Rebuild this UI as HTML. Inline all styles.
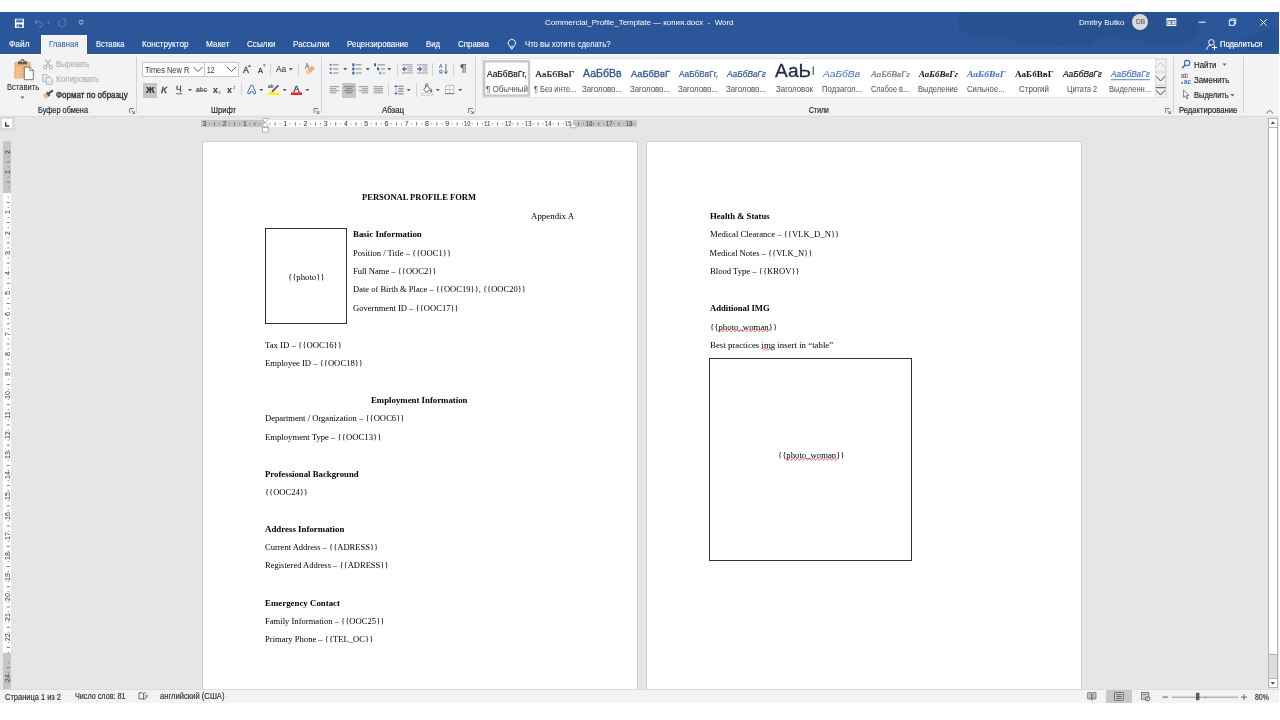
<!DOCTYPE html>
<html lang="ru"><head><meta charset="utf-8"><title>Word</title>
<style>
html,body{margin:0;padding:0;background:#fff;}
body{width:1280px;height:720px;position:relative;overflow:hidden;font-family:"Liberation Sans",sans-serif;}
#w div,#w span,#w svg{position:absolute;display:block;}
#w span{white-space:pre;transform-origin:0 50%;}
#w{will-change:transform;}
#w{position:absolute;left:0;top:0;width:1280px;height:720px;overflow:hidden;}
</style></head>
<body><div id="w">
<div style="left:0px;top:12px;width:1279px;height:42px;background:#2b579a;"></div>
<div style="left:0px;top:54px;width:1279px;height:62px;background:#f3f3f3;"></div>
<div style="left:0px;top:116px;width:1279px;height:573px;background:#e6e6e6;"></div>
<div style="left:0px;top:115px;width:1279px;height:1px;background:#efefef;"></div>
<div style="left:0px;top:116px;width:1279px;height:1px;background:#dcdcdc;"></div>
<div style="left:0px;top:689px;width:1279px;height:14px;background:#f3f3f3;"></div>
<div style="left:0px;top:689px;width:1279px;height:1px;background:#dcdcdc;"></div>
<svg style="left:880px;top:12px;" width="399" height="42" viewBox="0 0 399 42"><path d="M82 0 C76 5 76 16 84 21 C98 27 116 22 130 25 C134 30 136 32 142 32 C165 35 190 31 210 33 C214 31 213 28 218 27 C232 24 248 29 260 27 C263 29 263 31 268 31 C282 33 296 33 305 31 C314 28 318 22 319 15 C320 9 320 4 323 0Z" fill="#27508f" opacity="0.85"/><path d="M399 17 C388 18 372 20 364 27 C358 33 366 38 376 38 C386 39 394 37 399 36Z" fill="#27508f" opacity="0.7"/></svg>
<span style="top:19.05px;font-size:7.4px;line-height:7.4px;color:#ffffff;left:545.00px;transform:scaleX(1.0741);">Commercial_Profile_Template — копия.docx  -  Word</span>
<span style="top:18.95px;font-size:7.6px;line-height:7.6px;color:#ffffff;left:1078.50px;transform:scaleX(1.0467);">Dmitry Butko</span>
<div style="left:1132px;top:14px;width:16.4px;height:16.4px;border-radius:50%;background:#d9d9d9;"></div>
<span style="top:19.35px;font-size:6.8px;line-height:6.8px;color:#4a4a4a;left:1135.80px;transform:scaleX(0.9521);">DB</span>
<div style="left:0px;top:54px;width:1279px;height:1px;background:#fcfcfc;"></div>
<div style="left:41px;top:35px;width:46px;height:20px;background:#f3f3f3;box-sizing:border-box;border:1px solid #fdfdfd;border-bottom:none;"></div>
<span style="top:40.05px;font-size:8.4px;line-height:8.4px;color:#ffffff;left:9.00px;transform:scaleX(0.9954);-webkit-text-stroke:0.1px #ffffff;">Файл</span>
<span style="top:40.05px;font-size:8.4px;line-height:8.4px;color:#2b579a;left:49.00px;transform:scaleX(0.9250);">Главная</span>
<span style="top:40.05px;font-size:8.4px;line-height:8.4px;color:#ffffff;left:96.00px;transform:scaleX(0.9152);-webkit-text-stroke:0.1px #ffffff;">Вставка</span>
<span style="top:40.05px;font-size:8.4px;line-height:8.4px;color:#ffffff;left:142.00px;transform:scaleX(0.9735);-webkit-text-stroke:0.1px #ffffff;">Конструктор</span>
<span style="top:40.05px;font-size:8.4px;line-height:8.4px;color:#ffffff;left:206.00px;transform:scaleX(0.9914);-webkit-text-stroke:0.1px #ffffff;">Макет</span>
<span style="top:40.05px;font-size:8.4px;line-height:8.4px;color:#ffffff;left:247.00px;transform:scaleX(0.9666);-webkit-text-stroke:0.1px #ffffff;">Ссылки</span>
<span style="top:40.05px;font-size:8.4px;line-height:8.4px;color:#ffffff;left:293.00px;transform:scaleX(0.9709);-webkit-text-stroke:0.1px #ffffff;">Рассылки</span>
<span style="top:40.05px;font-size:8.4px;line-height:8.4px;color:#ffffff;left:347.00px;transform:scaleX(0.9510);-webkit-text-stroke:0.1px #ffffff;">Рецензирование</span>
<span style="top:40.05px;font-size:8.4px;line-height:8.4px;color:#ffffff;left:426.00px;transform:scaleX(0.9237);-webkit-text-stroke:0.1px #ffffff;">Вид</span>
<span style="top:40.05px;font-size:8.4px;line-height:8.4px;color:#ffffff;left:457.50px;transform:scaleX(0.9434);-webkit-text-stroke:0.1px #ffffff;">Справка</span>
<span style="top:40.05px;font-size:8.4px;line-height:8.4px;color:#ffffff;left:524.50px;transform:scaleX(0.9234);-webkit-text-stroke:0.05px #ffffff;">Что вы хотите сделать?</span>
<span style="top:40.05px;font-size:8.4px;line-height:8.4px;color:#ffffff;left:1219.60px;transform:scaleX(0.9168);-webkit-text-stroke:0.18px #ffffff;">Поделиться</span>
<div style="left:136px;top:57px;width:1px;height:56px;background:#d2d2d2;"></div>
<div style="left:321px;top:57px;width:1px;height:56px;background:#d2d2d2;"></div>
<div style="left:475px;top:57px;width:1px;height:56px;background:#d2d2d2;"></div>
<div style="left:1173px;top:57px;width:1px;height:56px;background:#d2d2d2;"></div>
<div style="left:1243px;top:57px;width:1px;height:56px;background:#d2d2d2;"></div>
<span style="top:106.05px;font-size:8.4px;line-height:8.4px;color:#262626;left:38.00px;transform:scaleX(0.8784);-webkit-text-stroke:0.18px #262626;">Буфер обмена</span>
<span style="top:106.05px;font-size:8.4px;line-height:8.4px;color:#262626;left:211.00px;transform:scaleX(0.9070);-webkit-text-stroke:0.18px #262626;">Шрифт</span>
<span style="top:106.05px;font-size:8.4px;line-height:8.4px;color:#262626;left:382.00px;transform:scaleX(0.9362);-webkit-text-stroke:0.18px #262626;">Абзац</span>
<span style="top:106.05px;font-size:8.4px;line-height:8.4px;color:#262626;left:809.00px;transform:scaleX(0.8285);-webkit-text-stroke:0.18px #262626;">Стили</span>
<span style="top:106.05px;font-size:8.4px;line-height:8.4px;color:#262626;left:1178.70px;transform:scaleX(0.9136);-webkit-text-stroke:0.18px #262626;">Редактирование</span>
<span style="top:82.95px;font-size:8.6px;line-height:8.6px;color:#262626;left:6.50px;transform:scaleX(0.8864);-webkit-text-stroke:0.05px #262626;">Вставить</span>
<span style="top:60.05px;font-size:8.4px;line-height:8.4px;color:#b3b3b3;left:55.80px;transform:scaleX(0.8913);-webkit-text-stroke:0.18px #b3b3b3;">Вырезать</span>
<span style="top:75.05px;font-size:8.4px;line-height:8.4px;color:#b3b3b3;left:55.80px;transform:scaleX(0.9580);-webkit-text-stroke:0.18px #b3b3b3;">Копировать</span>
<span style="top:91.05px;font-size:8.4px;line-height:8.4px;color:#262626;left:55.80px;transform:scaleX(0.9546);-webkit-text-stroke:0.3px #262626;">Формат по образцу</span>
<div style="left:142px;top:62px;width:63px;height:15px;background:#fff;box-sizing:border-box;border:1px solid #c8c8c8;"></div>
<div style="left:204px;top:62px;width:35px;height:15px;background:#fff;box-sizing:border-box;border:1px solid #c8c8c8;"></div>
<span style="top:65.65px;font-size:9.2px;line-height:9.2px;color:#333;left:145.30px;transform:scaleX(0.8084);">Times New R</span>
<span style="top:65.65px;font-size:9.2px;line-height:9.2px;color:#333;left:207.00px;transform:scaleX(0.7133);">12</span>
<span style="top:65.05px;font-size:9.4px;line-height:9.4px;color:#444;left:242.80px;transform:scaleX(0.9416);-webkit-text-stroke:0.3px #444;">A</span>
<span style="top:67.25px;font-size:7px;line-height:7px;color:#444;left:258.00px;transform:scaleX(1.0274);-webkit-text-stroke:0.3px #444;">A</span>
<div style="left:270px;top:63px;width:1px;height:13px;background:#d2d2d2;"></div>
<span style="top:64.95px;font-size:8.6px;line-height:8.6px;color:#444;left:275.70px;transform:scaleX(0.9795);-webkit-text-stroke:0.1px #444;">Aa</span>
<div style="left:298px;top:63px;width:1px;height:13px;background:#d2d2d2;"></div>
<span style="top:62.05px;font-size:8.4px;line-height:8.4px;color:#555;left:304.90px;transform:scaleX(0.7866);-webkit-text-stroke:0.1px #555;">A</span>
<div style="left:142.5px;top:83px;width:14.5px;height:15px;background:#c6c6c6;"></div>
<span style="top:85.95px;font-size:8.6px;line-height:8.6px;color:#333;font-weight:bold;left:145.60px;transform:scaleX(1.1052);-webkit-text-stroke:0.18px #333;">Ж</span>
<span style="top:85.85px;font-size:8.8px;line-height:8.8px;color:#444;font-style:italic;left:161.00px;transform:scaleX(1.1566);-webkit-text-stroke:0.35px #444;">К</span>
<span style="top:84.95px;font-size:8.6px;line-height:8.6px;color:#3a3a3a;left:176.20px;transform:scaleX(0.9766);-webkit-text-stroke:0.3px #3a3a3a;">Ч</span>
<span style="top:85.95px;font-size:7.6px;line-height:7.6px;color:#4a4a4a;left:196.00px;transform:scaleX(0.8980);-webkit-text-stroke:0.1px #4a4a4a;">abc</span>
<span style="top:85.05px;font-size:9.4px;line-height:9.4px;color:#444;font-weight:bold;left:212.60px;transform:scaleX(0.9198);-webkit-text-stroke:0.18px #444;">x</span>
<span style="top:90.65px;font-size:4.2px;line-height:4.2px;color:#3b6cb5;left:218.20px;-webkit-text-stroke:0.1px #3b6cb5;">2</span>
<span style="top:85.05px;font-size:9.4px;line-height:9.4px;color:#444;font-weight:bold;left:227.40px;transform:scaleX(0.9198);-webkit-text-stroke:0.18px #444;">x</span>
<span style="top:85.65px;font-size:4.2px;line-height:4.2px;color:#3b6cb5;left:233.00px;-webkit-text-stroke:0.1px #3b6cb5;">2</span>
<div style="left:241px;top:83px;width:1px;height:14px;background:#d2d2d2;"></div>
<span style="top:83.65px;font-size:5.2px;line-height:5.2px;color:#444;font-style:italic;left:268.40px;transform:scaleX(0.9341);-webkit-text-stroke:0.15px #444;">ab</span>
<span style="top:84.75px;font-size:9px;line-height:9px;color:#3a3a3a;left:293.60px;-webkit-text-stroke:0.35px #3a3a3a;">A</span>
<div style="left:397px;top:63px;width:1px;height:13px;background:#d2d2d2;"></div>
<div style="left:432px;top:63px;width:1px;height:13px;background:#d2d2d2;"></div>
<span style="top:63.65px;font-size:5.2px;line-height:5.2px;color:#3b6cb5;font-weight:bold;left:439.20px;transform:scaleX(0.9600);">А</span>
<span style="top:69.65px;font-size:5.2px;line-height:5.2px;color:#3b6cb5;font-weight:bold;left:439.20px;transform:scaleX(0.9640);">Я</span>
<div style="left:453px;top:63px;width:1px;height:13px;background:#d2d2d2;"></div>
<span style="top:63.75px;font-size:10px;line-height:10px;color:#555;left:459.80px;transform:scaleX(1.2651);-webkit-text-stroke:0.1px #555;">¶</span>
<div style="left:342px;top:83px;width:14px;height:15px;background:#c6c6c6;"></div>
<div style="left:388px;top:83px;width:1px;height:14px;background:#d2d2d2;"></div>
<div style="left:416px;top:83px;width:1px;height:14px;background:#d2d2d2;"></div>
<div style="left:482px;top:58px;width:685px;height:40px;background:#fff;box-sizing:border-box;border:1px solid #e2e2e2;"></div>
<svg style="left:482px;top:58px;" width="52" height="42" viewBox="0 0 52 42"><rect x="2.200" y="3.400" width="44.800" height="34.200" fill="#fff" stroke="#c8c8c8" stroke-width="2.400"/></svg>
<span style="top:69.95px;font-size:8.6px;line-height:8.6px;color:#111;left:487.00px;transform:scaleX(0.9755);-webkit-text-stroke:0.18px #111;">АаБбВвГг,</span>
<span style="top:85.05px;font-size:8.4px;line-height:8.4px;color:#585858;left:486.00px;transform:scaleX(0.9579);-webkit-text-stroke:0.05px #585858;">¶ Обычный</span>
<span style="top:69.75px;font-size:9px;line-height:9px;color:#111;font-family:'Liberation Serif', serif;left:534.80px;transform:scaleX(1.1018);-webkit-text-stroke:0.2px #111;">АаБбВвГ</span>
<span style="top:85.05px;font-size:8.4px;line-height:8.4px;color:#585858;left:533.80px;transform:scaleX(0.8855);-webkit-text-stroke:0.05px #585858;">¶ Без инте...</span>
<span style="top:67.95px;font-size:10.6px;line-height:10.6px;color:#2f5496;left:583.00px;transform:scaleX(0.9949);-webkit-text-stroke:0.3px #2f5496;">АаБбВв</span>
<span style="top:85.05px;font-size:8.4px;line-height:8.4px;color:#585858;left:582.00px;transform:scaleX(0.9367);-webkit-text-stroke:0.05px #585858;">Заголово...</span>
<span style="top:68.95px;font-size:9.6px;line-height:9.6px;color:#2f5496;left:631.00px;transform:scaleX(0.9671);-webkit-text-stroke:0.3px #2f5496;">АаБбВвГ</span>
<span style="top:85.05px;font-size:8.4px;line-height:8.4px;color:#585858;left:630.00px;transform:scaleX(0.9367);-webkit-text-stroke:0.05px #585858;">Заголово...</span>
<span style="top:69.85px;font-size:8.8px;line-height:8.8px;color:#2f5496;left:679.00px;transform:scaleX(0.9383);-webkit-text-stroke:0.18px #2f5496;">АаБбВвГг,</span>
<span style="top:85.05px;font-size:8.4px;line-height:8.4px;color:#585858;left:678.00px;transform:scaleX(0.9367);-webkit-text-stroke:0.05px #585858;">Заголово...</span>
<span style="top:69.95px;font-size:8.6px;line-height:8.6px;color:#2f5496;font-style:italic;left:727.00px;transform:scaleX(0.9731);-webkit-text-stroke:0.18px #2f5496;">АаБбВвГг</span>
<span style="top:85.05px;font-size:8.4px;line-height:8.4px;color:#585858;left:726.00px;transform:scaleX(0.9367);-webkit-text-stroke:0.05px #585858;">Заголово...</span>
<span style="top:62.25px;font-size:18px;line-height:18px;color:#1f2a44;left:775.20px;transform:scaleX(1.0579);-webkit-text-stroke:0.3px #1f2a44;">АаЬ</span>
<span style="top:85.05px;font-size:8.4px;line-height:8.4px;color:#585858;left:776.00px;transform:scaleX(0.9393);-webkit-text-stroke:0.05px #585858;">Заголовок</span>
<span style="top:69.95px;font-size:8.6px;line-height:8.6px;color:#4472c4;font-style:italic;left:823.00px;transform:scaleX(1.1870);">АаБбВв</span>
<span style="top:85.05px;font-size:8.4px;line-height:8.4px;color:#585858;left:821.80px;transform:scaleX(0.9328);-webkit-text-stroke:0.05px #585858;">Подзагол...</span>
<span style="top:69.75px;font-size:9px;line-height:9px;color:#7a7a7a;font-family:'Liberation Serif', serif;font-style:italic;left:871.00px;transform:scaleX(1.0335);-webkit-text-stroke:0.2px #7a7a7a;">АаБбВвГг</span>
<span style="top:85.05px;font-size:8.4px;line-height:8.4px;color:#585858;left:871.00px;transform:scaleX(0.8742);-webkit-text-stroke:0.05px #585858;">Слабое в...</span>
<span style="top:69.75px;font-size:9px;line-height:9px;color:#111;font-family:'Liberation Serif', serif;font-weight:bold;font-style:italic;left:919.00px;transform:scaleX(0.9909);">АаБбВвГг</span>
<span style="top:85.05px;font-size:8.4px;line-height:8.4px;color:#585858;left:918.00px;transform:scaleX(0.9011);-webkit-text-stroke:0.05px #585858;">Выделение</span>
<span style="top:69.75px;font-size:9px;line-height:9px;color:#4472c4;font-family:'Liberation Serif', serif;font-weight:bold;font-style:italic;left:967.00px;transform:scaleX(1.0681);">АаБбВвГ</span>
<span style="top:85.05px;font-size:8.4px;line-height:8.4px;color:#585858;left:967.40px;transform:scaleX(0.9192);-webkit-text-stroke:0.05px #585858;">Сильное...</span>
<span style="top:69.75px;font-size:9px;line-height:9px;color:#111;font-family:'Liberation Serif', serif;font-weight:bold;left:1015.00px;transform:scaleX(1.0179);">АаБбВвГ</span>
<span style="top:85.05px;font-size:8.4px;line-height:8.4px;color:#585858;left:1019.00px;transform:scaleX(0.9486);-webkit-text-stroke:0.05px #585858;">Строгий</span>
<span style="top:69.95px;font-size:8.6px;line-height:8.6px;color:#111;font-style:italic;left:1063.00px;transform:scaleX(0.9731);-webkit-text-stroke:0.18px #111;">АаБбВвГг</span>
<span style="top:85.05px;font-size:8.4px;line-height:8.4px;color:#585858;left:1066.80px;transform:scaleX(0.8758);-webkit-text-stroke:0.05px #585858;">Цитата 2</span>
<span style="top:69.95px;font-size:8.6px;line-height:8.6px;color:#4472c4;font-style:italic;left:1111.00px;transform:scaleX(0.9681);-webkit-text-stroke:0.18px #4472c4;">АаБбВвГг</span>
<span style="top:85.05px;font-size:8.4px;line-height:8.4px;color:#585858;left:1109.00px;transform:scaleX(0.9002);-webkit-text-stroke:0.05px #585858;">Выделенн...</span>
<div style="left:1155px;top:59px;width:11px;height:13px;background:#f1f1f1;box-sizing:border-box;border:1px solid #dedede;"></div>
<div style="left:1155px;top:72px;width:11px;height:13px;background:#f1f1f1;box-sizing:border-box;border:1px solid #dedede;"></div>
<div style="left:1155px;top:85px;width:11px;height:13px;background:#f1f1f1;box-sizing:border-box;border:1px solid #dedede;"></div>
<span style="top:60.95px;font-size:8.61px;line-height:8.61px;color:#262626;left:1193.70px;transform:scaleX(0.9172);-webkit-text-stroke:0.18px #262626;">Найти</span>
<span style="top:72.25px;font-size:7px;line-height:7px;color:#555;left:1181.00px;transform:scaleX(0.9234);-webkit-text-stroke:0.1px #555;">ab</span>
<span style="top:78.25px;font-size:7px;line-height:7px;color:#3b6cb5;font-weight:bold;left:1184.20px;transform:scaleX(0.8978);">ac</span>
<span style="top:75.94px;font-size:8.61px;line-height:8.61px;color:#262626;left:1193.70px;transform:scaleX(0.9139);-webkit-text-stroke:0.18px #262626;">Заменить</span>
<span style="top:90.94px;font-size:8.61px;line-height:8.61px;color:#262626;left:1193.70px;transform:scaleX(0.8750);-webkit-text-stroke:0.18px #262626;">Выделить</span>
<div style="left:201px;top:120px;width:436px;height:7.4px;background:#c6c6c6;"></div>
<div style="left:264.6px;top:120px;width:308.4px;height:7.4px;background:#fff;"></div>
<span style="top:120.25px;font-size:7px;line-height:7px;color:#4a4a4a;left:202.46px;-webkit-text-stroke:0.1px #4a4a4a;">3</span>
<span style="top:120.25px;font-size:7px;line-height:7px;color:#4a4a4a;left:222.69px;-webkit-text-stroke:0.1px #4a4a4a;">2</span>
<span style="top:120.25px;font-size:7px;line-height:7px;color:#4a4a4a;left:242.92px;-webkit-text-stroke:0.1px #4a4a4a;">1</span>
<span style="top:120.25px;font-size:7px;line-height:7px;color:#4a4a4a;left:283.38px;-webkit-text-stroke:0.1px #4a4a4a;">1</span>
<span style="top:120.25px;font-size:7px;line-height:7px;color:#4a4a4a;left:303.61px;-webkit-text-stroke:0.1px #4a4a4a;">2</span>
<span style="top:120.25px;font-size:7px;line-height:7px;color:#4a4a4a;left:323.84px;-webkit-text-stroke:0.1px #4a4a4a;">3</span>
<span style="top:120.25px;font-size:7px;line-height:7px;color:#4a4a4a;left:344.07px;-webkit-text-stroke:0.1px #4a4a4a;">4</span>
<span style="top:120.25px;font-size:7px;line-height:7px;color:#4a4a4a;left:364.30px;-webkit-text-stroke:0.1px #4a4a4a;">5</span>
<span style="top:120.25px;font-size:7px;line-height:7px;color:#4a4a4a;left:384.53px;-webkit-text-stroke:0.1px #4a4a4a;">6</span>
<span style="top:120.25px;font-size:7px;line-height:7px;color:#4a4a4a;left:404.76px;-webkit-text-stroke:0.1px #4a4a4a;">7</span>
<span style="top:120.25px;font-size:7px;line-height:7px;color:#4a4a4a;left:424.99px;-webkit-text-stroke:0.1px #4a4a4a;">8</span>
<span style="top:120.25px;font-size:7px;line-height:7px;color:#4a4a4a;left:445.22px;-webkit-text-stroke:0.1px #4a4a4a;">9</span>
<span style="top:120.25px;font-size:7px;line-height:7px;color:#4a4a4a;left:464.20px;transform:scaleX(0.8208);-webkit-text-stroke:0.1px #4a4a4a;">10</span>
<span style="top:120.25px;font-size:7px;line-height:7px;color:#4a4a4a;left:484.43px;transform:scaleX(0.8790);-webkit-text-stroke:0.1px #4a4a4a;">11</span>
<span style="top:120.25px;font-size:7px;line-height:7px;color:#4a4a4a;left:504.66px;transform:scaleX(0.8208);-webkit-text-stroke:0.1px #4a4a4a;">12</span>
<span style="top:120.25px;font-size:7px;line-height:7px;color:#4a4a4a;left:524.89px;transform:scaleX(0.8208);-webkit-text-stroke:0.1px #4a4a4a;">13</span>
<span style="top:120.25px;font-size:7px;line-height:7px;color:#4a4a4a;left:545.12px;transform:scaleX(0.8208);-webkit-text-stroke:0.1px #4a4a4a;">14</span>
<span style="top:120.25px;font-size:7px;line-height:7px;color:#4a4a4a;left:565.35px;transform:scaleX(0.8208);-webkit-text-stroke:0.1px #4a4a4a;">15</span>
<span style="top:120.25px;font-size:7px;line-height:7px;color:#4a4a4a;left:585.58px;transform:scaleX(0.8208);-webkit-text-stroke:0.1px #4a4a4a;">16</span>
<span style="top:120.25px;font-size:7px;line-height:7px;color:#4a4a4a;left:605.81px;transform:scaleX(0.8208);-webkit-text-stroke:0.1px #4a4a4a;">17</span>
<span style="top:120.25px;font-size:7px;line-height:7px;color:#4a4a4a;left:626.04px;transform:scaleX(0.8208);-webkit-text-stroke:0.1px #4a4a4a;">18</span>
<div style="left:0px;top:117px;width:15px;height:14px;background:#dadada;"></div>
<div style="left:2px;top:119px;width:10px;height:9px;background:#fff;"></div>
<div style="left:3.4px;top:141px;width:7.6px;height:548px;background:#fff;"></div>
<div style="left:3.4px;top:141px;width:7.6px;height:52px;background:#c6c6c6;"></div>
<div style="left:3.4px;top:652.6px;width:7.6px;height:36.4px;background:#c6c6c6;"></div>
<div style="left:4.300px;top:147.74px;width:7.600px;height:8px;"><span style="left:0;top:0;width:8px;height:7.600px;line-height:7.600px;font-size:7px;color:#4a4a4a;-webkit-text-stroke:0.1px #4a4a4a;text-align:center;transform-origin:0 0;transform:translate(0,8px) rotate(-90deg);">2</span></div>
<div style="left:4.300px;top:167.97px;width:7.600px;height:8px;"><span style="left:0;top:0;width:8px;height:7.600px;line-height:7.600px;font-size:7px;color:#4a4a4a;-webkit-text-stroke:0.1px #4a4a4a;text-align:center;transform-origin:0 0;transform:translate(0,8px) rotate(-90deg);">1</span></div>
<div style="left:4.300px;top:208.43px;width:7.600px;height:8px;"><span style="left:0;top:0;width:8px;height:7.600px;line-height:7.600px;font-size:7px;color:#4a4a4a;-webkit-text-stroke:0.1px #4a4a4a;text-align:center;transform-origin:0 0;transform:translate(0,8px) rotate(-90deg);">1</span></div>
<div style="left:4.300px;top:228.66px;width:7.600px;height:8px;"><span style="left:0;top:0;width:8px;height:7.600px;line-height:7.600px;font-size:7px;color:#4a4a4a;-webkit-text-stroke:0.1px #4a4a4a;text-align:center;transform-origin:0 0;transform:translate(0,8px) rotate(-90deg);">2</span></div>
<div style="left:4.300px;top:248.89px;width:7.600px;height:8px;"><span style="left:0;top:0;width:8px;height:7.600px;line-height:7.600px;font-size:7px;color:#4a4a4a;-webkit-text-stroke:0.1px #4a4a4a;text-align:center;transform-origin:0 0;transform:translate(0,8px) rotate(-90deg);">3</span></div>
<div style="left:4.300px;top:269.12px;width:7.600px;height:8px;"><span style="left:0;top:0;width:8px;height:7.600px;line-height:7.600px;font-size:7px;color:#4a4a4a;-webkit-text-stroke:0.1px #4a4a4a;text-align:center;transform-origin:0 0;transform:translate(0,8px) rotate(-90deg);">4</span></div>
<div style="left:4.300px;top:289.35px;width:7.600px;height:8px;"><span style="left:0;top:0;width:8px;height:7.600px;line-height:7.600px;font-size:7px;color:#4a4a4a;-webkit-text-stroke:0.1px #4a4a4a;text-align:center;transform-origin:0 0;transform:translate(0,8px) rotate(-90deg);">5</span></div>
<div style="left:4.300px;top:309.58px;width:7.600px;height:8px;"><span style="left:0;top:0;width:8px;height:7.600px;line-height:7.600px;font-size:7px;color:#4a4a4a;-webkit-text-stroke:0.1px #4a4a4a;text-align:center;transform-origin:0 0;transform:translate(0,8px) rotate(-90deg);">6</span></div>
<div style="left:4.300px;top:329.81px;width:7.600px;height:8px;"><span style="left:0;top:0;width:8px;height:7.600px;line-height:7.600px;font-size:7px;color:#4a4a4a;-webkit-text-stroke:0.1px #4a4a4a;text-align:center;transform-origin:0 0;transform:translate(0,8px) rotate(-90deg);">7</span></div>
<div style="left:4.300px;top:350.04px;width:7.600px;height:8px;"><span style="left:0;top:0;width:8px;height:7.600px;line-height:7.600px;font-size:7px;color:#4a4a4a;-webkit-text-stroke:0.1px #4a4a4a;text-align:center;transform-origin:0 0;transform:translate(0,8px) rotate(-90deg);">8</span></div>
<div style="left:4.300px;top:370.27px;width:7.600px;height:8px;"><span style="left:0;top:0;width:8px;height:7.600px;line-height:7.600px;font-size:7px;color:#4a4a4a;-webkit-text-stroke:0.1px #4a4a4a;text-align:center;transform-origin:0 0;transform:translate(0,8px) rotate(-90deg);">9</span></div>
<div style="left:4.300px;top:390.50px;width:7.600px;height:8px;"><span style="left:0;top:0;width:8px;height:7.600px;line-height:7.600px;font-size:7px;color:#4a4a4a;-webkit-text-stroke:0.1px #4a4a4a;text-align:center;transform-origin:0 0;transform:translate(0,8px) rotate(-90deg);">10</span></div>
<div style="left:4.300px;top:410.73px;width:7.600px;height:8px;"><span style="left:0;top:0;width:8px;height:7.600px;line-height:7.600px;font-size:7px;color:#4a4a4a;-webkit-text-stroke:0.1px #4a4a4a;text-align:center;transform-origin:0 0;transform:translate(0,8px) rotate(-90deg);">11</span></div>
<div style="left:4.300px;top:430.96px;width:7.600px;height:8px;"><span style="left:0;top:0;width:8px;height:7.600px;line-height:7.600px;font-size:7px;color:#4a4a4a;-webkit-text-stroke:0.1px #4a4a4a;text-align:center;transform-origin:0 0;transform:translate(0,8px) rotate(-90deg);">12</span></div>
<div style="left:4.300px;top:451.19px;width:7.600px;height:8px;"><span style="left:0;top:0;width:8px;height:7.600px;line-height:7.600px;font-size:7px;color:#4a4a4a;-webkit-text-stroke:0.1px #4a4a4a;text-align:center;transform-origin:0 0;transform:translate(0,8px) rotate(-90deg);">13</span></div>
<div style="left:4.300px;top:471.42px;width:7.600px;height:8px;"><span style="left:0;top:0;width:8px;height:7.600px;line-height:7.600px;font-size:7px;color:#4a4a4a;-webkit-text-stroke:0.1px #4a4a4a;text-align:center;transform-origin:0 0;transform:translate(0,8px) rotate(-90deg);">14</span></div>
<div style="left:4.300px;top:491.65px;width:7.600px;height:8px;"><span style="left:0;top:0;width:8px;height:7.600px;line-height:7.600px;font-size:7px;color:#4a4a4a;-webkit-text-stroke:0.1px #4a4a4a;text-align:center;transform-origin:0 0;transform:translate(0,8px) rotate(-90deg);">15</span></div>
<div style="left:4.300px;top:511.88px;width:7.600px;height:8px;"><span style="left:0;top:0;width:8px;height:7.600px;line-height:7.600px;font-size:7px;color:#4a4a4a;-webkit-text-stroke:0.1px #4a4a4a;text-align:center;transform-origin:0 0;transform:translate(0,8px) rotate(-90deg);">16</span></div>
<div style="left:4.300px;top:532.11px;width:7.600px;height:8px;"><span style="left:0;top:0;width:8px;height:7.600px;line-height:7.600px;font-size:7px;color:#4a4a4a;-webkit-text-stroke:0.1px #4a4a4a;text-align:center;transform-origin:0 0;transform:translate(0,8px) rotate(-90deg);">17</span></div>
<div style="left:4.300px;top:552.34px;width:7.600px;height:8px;"><span style="left:0;top:0;width:8px;height:7.600px;line-height:7.600px;font-size:7px;color:#4a4a4a;-webkit-text-stroke:0.1px #4a4a4a;text-align:center;transform-origin:0 0;transform:translate(0,8px) rotate(-90deg);">18</span></div>
<div style="left:4.300px;top:572.57px;width:7.600px;height:8px;"><span style="left:0;top:0;width:8px;height:7.600px;line-height:7.600px;font-size:7px;color:#4a4a4a;-webkit-text-stroke:0.1px #4a4a4a;text-align:center;transform-origin:0 0;transform:translate(0,8px) rotate(-90deg);">19</span></div>
<div style="left:4.300px;top:592.80px;width:7.600px;height:8px;"><span style="left:0;top:0;width:8px;height:7.600px;line-height:7.600px;font-size:7px;color:#4a4a4a;-webkit-text-stroke:0.1px #4a4a4a;text-align:center;transform-origin:0 0;transform:translate(0,8px) rotate(-90deg);">20</span></div>
<div style="left:4.300px;top:613.03px;width:7.600px;height:8px;"><span style="left:0;top:0;width:8px;height:7.600px;line-height:7.600px;font-size:7px;color:#4a4a4a;-webkit-text-stroke:0.1px #4a4a4a;text-align:center;transform-origin:0 0;transform:translate(0,8px) rotate(-90deg);">21</span></div>
<div style="left:4.300px;top:633.26px;width:7.600px;height:8px;"><span style="left:0;top:0;width:8px;height:7.600px;line-height:7.600px;font-size:7px;color:#4a4a4a;-webkit-text-stroke:0.1px #4a4a4a;text-align:center;transform-origin:0 0;transform:translate(0,8px) rotate(-90deg);">22</span></div>
<div style="left:4.300px;top:673.72px;width:7.600px;height:8px;"><span style="left:0;top:0;width:8px;height:7.600px;line-height:7.600px;font-size:7px;color:#4a4a4a;-webkit-text-stroke:0.1px #4a4a4a;text-align:center;transform-origin:0 0;transform:translate(0,8px) rotate(-90deg);">24</span></div>
<div style="left:202px;top:141px;width:436px;height:548px;background:#fff;box-sizing:border-box;border:1px solid #d0d0d0;border-bottom:none;"></div>
<div style="left:646px;top:141px;width:436px;height:548px;background:#fff;box-sizing:border-box;border:1px solid #cdcdcd;border-bottom:none;"></div>
<span style="top:192.99px;font-size:8.53px;line-height:8.53px;color:#000;font-family:'Liberation Serif', serif;font-weight:bold;left:362.00px;">PERSONAL PROFILE FORM</span>
<span style="top:211.99px;font-size:8.53px;line-height:8.53px;color:#000;font-family:'Liberation Serif', serif;left:530.80px;transform:scaleX(1.0409);">Appendix A</span>
<div style="left:265px;top:228px;width:82px;height:95.6px;background:transparent;box-sizing:border-box;border:1px solid #333;"></div>
<span style="top:272.99px;font-size:8.53px;line-height:8.53px;color:#000;font-family:'Liberation Serif', serif;left:288.00px;transform:scaleX(1.0238);">{{photo}}</span>
<span style="top:229.99px;font-size:8.53px;line-height:8.53px;color:#000;font-family:'Liberation Serif', serif;font-weight:bold;left:353.00px;transform:scaleX(1.0424);">Basic Information</span>
<span style="top:248.99px;font-size:8.53px;line-height:8.53px;color:#000;font-family:'Liberation Serif', serif;left:353.00px;transform:scaleX(1.0063);">Position / Title – {{ООС1}}</span>
<span style="top:266.99px;font-size:8.53px;line-height:8.53px;color:#000;font-family:'Liberation Serif', serif;left:353.00px;">Full Name – {{ООС2}}</span>
<span style="top:284.99px;font-size:8.53px;line-height:8.53px;color:#000;font-family:'Liberation Serif', serif;left:353.00px;">Date of Birth &amp; Place – {{ООС19}}, {{ООС20}}</span>
<span style="top:303.99px;font-size:8.53px;line-height:8.53px;color:#000;font-family:'Liberation Serif', serif;left:353.00px;transform:scaleX(1.0052);">Government ID – {{ООС17}}</span>
<span style="top:340.99px;font-size:8.53px;line-height:8.53px;color:#000;font-family:'Liberation Serif', serif;left:265.00px;transform:scaleX(1.0235);">Tax ID – {{ООС16}}</span>
<span style="top:358.99px;font-size:8.53px;line-height:8.53px;color:#000;font-family:'Liberation Serif', serif;left:265.00px;transform:scaleX(1.0092);">Employee ID – {{ООС18}}</span>
<span style="top:395.99px;font-size:8.53px;line-height:8.53px;color:#000;font-family:'Liberation Serif', serif;font-weight:bold;left:371.00px;transform:scaleX(1.0328);">Employment Information</span>
<span style="top:413.99px;font-size:8.53px;line-height:8.53px;color:#000;font-family:'Liberation Serif', serif;left:265.00px;transform:scaleX(1.0077);">Department / Organization – {{ООС6}}</span>
<span style="top:432.99px;font-size:8.53px;line-height:8.53px;color:#000;font-family:'Liberation Serif', serif;left:265.00px;transform:scaleX(1.0171);">Employment Type – {{ООС13}}</span>
<span style="top:469.99px;font-size:8.53px;line-height:8.53px;color:#000;font-family:'Liberation Serif', serif;font-weight:bold;left:265.00px;transform:scaleX(1.0268);">Professional Background</span>
<span style="top:487.99px;font-size:8.53px;line-height:8.53px;color:#000;font-family:'Liberation Serif', serif;left:265.00px;">{{ООС24}}</span>
<span style="top:524.99px;font-size:8.53px;line-height:8.53px;color:#000;font-family:'Liberation Serif', serif;font-weight:bold;left:265.00px;transform:scaleX(1.0411);">Address Information</span>
<span style="top:542.99px;font-size:8.53px;line-height:8.53px;color:#000;font-family:'Liberation Serif', serif;left:265.00px;">Current Address – {{ADRESS}}</span>
<span style="top:560.99px;font-size:8.53px;line-height:8.53px;color:#000;font-family:'Liberation Serif', serif;left:265.00px;">Registered Address – {{ADRESS}}</span>
<span style="top:598.99px;font-size:8.53px;line-height:8.53px;color:#000;font-family:'Liberation Serif', serif;font-weight:bold;left:265.00px;transform:scaleX(1.0396);">Emergency Contact</span>
<span style="top:616.99px;font-size:8.53px;line-height:8.53px;color:#000;font-family:'Liberation Serif', serif;left:265.00px;transform:scaleX(1.0084);">Family Information – {{ООС25}}</span>
<span style="top:634.99px;font-size:8.53px;line-height:8.53px;color:#000;font-family:'Liberation Serif', serif;left:265.00px;transform:scaleX(1.0073);">Primary Phone – {{TEL_ОС}}</span>
<span style="top:211.99px;font-size:8.53px;line-height:8.53px;color:#000;font-family:'Liberation Serif', serif;font-weight:bold;left:709.60px;transform:scaleX(1.0175);">Health &amp; Status</span>
<span style="top:229.99px;font-size:8.53px;line-height:8.53px;color:#000;font-family:'Liberation Serif', serif;left:709.60px;transform:scaleX(1.0153);">Medical Clearance – {{VLK_D_N}}</span>
<span style="top:248.99px;font-size:8.53px;line-height:8.53px;color:#000;font-family:'Liberation Serif', serif;left:709.60px;">Medical Notes – {{VLK_N}}</span>
<span style="top:266.99px;font-size:8.53px;line-height:8.53px;color:#000;font-family:'Liberation Serif', serif;left:709.60px;transform:scaleX(1.0112);">Blood Type – {{KROV}}</span>
<span style="top:303.99px;font-size:8.53px;line-height:8.53px;color:#000;font-family:'Liberation Serif', serif;font-weight:bold;left:709.60px;transform:scaleX(1.0132);">Additional IMG</span>
<span style="top:322.99px;font-size:8.53px;line-height:8.53px;color:#000;font-family:'Liberation Serif', serif;left:709.60px;transform:scaleX(1.0326);">{{photo_woman}}</span>
<span style="top:340.99px;font-size:8.53px;line-height:8.53px;color:#000;font-family:'Liberation Serif', serif;left:709.60px;transform:scaleX(1.0357);">Best practices img insert in “table”</span>
<div style="left:709px;top:358px;width:203.4px;height:202.6px;background:transparent;box-sizing:border-box;border:1px solid #333;"></div>
<span style="top:450.99px;font-size:8.53px;line-height:8.53px;color:#000;font-family:'Liberation Serif', serif;left:777.50px;transform:scaleX(1.0218);">{{photo_woman}}</span>
<div style="left:1268px;top:118px;width:10px;height:570px;background:#fff;box-sizing:border-box;border:1px solid #b4b4b4;"></div>
<div style="left:1269px;top:654px;width:8px;height:24px;background:#dcdcdc;"></div>
<div style="left:1268px;top:127px;width:10px;height:1px;background:#b4b4b4;"></div>
<div style="left:1268px;top:654px;width:10px;height:1px;background:#b4b4b4;"></div>
<div style="left:1268px;top:678px;width:10px;height:1px;background:#b4b4b4;"></div>
<span style="top:692.95px;font-size:8.61px;line-height:8.61px;color:#333;left:5.00px;transform:scaleX(0.8693);-webkit-text-stroke:0.18px #333;">Страница 1 из 2</span>
<span style="top:691.95px;font-size:8.61px;line-height:8.61px;color:#333;left:75.00px;transform:scaleX(0.8388);-webkit-text-stroke:0.18px #333;">Число слов: 81</span>
<span style="top:691.95px;font-size:8.61px;line-height:8.61px;color:#333;left:160.00px;transform:scaleX(0.8876);-webkit-text-stroke:0.18px #333;">английский (США)</span>
<div style="left:1106px;top:690px;width:26px;height:13px;background:#c8c8c8;"></div>
<span style="top:693.05px;font-size:8.4px;line-height:8.4px;color:#333;left:1255.40px;transform:scaleX(0.8291);-webkit-text-stroke:0.18px #333;">80%</span>
<svg style="left:0;top:0;" width="1280" height="720" viewBox="0 0 1280 720">
<g transform="translate(14.6,18.4)"><path d="M0.300 0.300h9v9.200h-9z" fill="#fff"/><rect x="1.700" y="1.100" width="6.200" height="2.900" fill="#2b579a"/><rect x="1.700" y="1.800" width="6.200" height="0.900" fill="#7e9bcb"/><rect x="2" y="6.100" width="5.600" height="2.700" fill="#2b579a"/><rect x="3" y="7.400" width="1.300" height="1.400" fill="#fff"/></g>
<g transform="translate(34,19)"><path d="M0.800 2.900h5.200a2.500 2.500 0 0 1 0 5h-1.200" fill="none" stroke="#6585bf" stroke-width="1"/><path d="M3.100 0.600L0.800 2.900l2.300 2.300" fill="none" stroke="#6585bf" stroke-width="1"/></g>
<g transform="translate(46.8,21.8)"><path d="M0 0h3.400l-1.700 2z" fill="#6585bf"/></g>
<g transform="translate(57,18.6)"><path d="M3.600 1.500a3.600 3.600 0 1 0 4.200 0.800" fill="none" stroke="#6585bf" stroke-width="1"/><path d="M5.600 0.500h2.700v2.700" fill="none" stroke="#6585bf" stroke-width="1"/></g>
<g transform="translate(78,20)"><rect x="0.800" y="0.300" width="4.600" height="0.900" fill="#c9d5ea"/><path d="M0.800 2.300L3.100 4.500l2.300-2.200" fill="none" stroke="#dfe7f3" stroke-width="0.9"/></g>
<g transform="translate(1166.5,18.2)"><rect x="0.500" y="0.500" width="8.800" height="6.800" fill="none" stroke="#fff" stroke-width="1"/><rect x="0.500" y="0.500" width="8.800" height="1.500" fill="#fff"/><rect x="1.600" y="2.900" width="6.600" height="3.400" fill="#dfe6f2"/><path d="M4.900 3.300v2.800M3.600 4.500l1.300-1.300 1.300 1.300" fill="none" stroke="#2b579a" stroke-width="0.800"/></g>
<rect x="1198.60" y="21.70" width="7.00" height="1.00" fill="#ffffff"/>
<g transform="translate(1228.8,18.4)"><rect x="0.500" y="1.900" width="5" height="5" fill="none" stroke="#fff" stroke-width="0.900"/><path d="M1.900 1.900V0.500h5v5H5.500" fill="none" stroke="#fff" stroke-width="0.900"/></g>
<g transform="translate(1260,19)"><path d="M0.3 0.3L6.7 6.7M6.7 0.3L0.3 6.7" stroke="#fff" stroke-width="1"/></g>
<g transform="translate(507.7,39)"><path d="M4.150 10.400L1.500 6.500A3.650 3.650 0 1 1 6.800 6.500Z" fill="none" stroke="#fff" stroke-width="0.950" stroke-linejoin="round"/><path d="M3.100 6.600L4.150 8.600L5.200 6.600" fill="none" stroke="#fff" stroke-width="0.700"/></g>
<g transform="translate(1206.2,39)"><circle cx="5.200" cy="3.400" r="2.800" fill="none" stroke="#fff" stroke-width="0.950"/><path d="M0.500 10.800c0.200-2.800 1.800-4.500 4.200-4.600" fill="none" stroke="#fff" stroke-width="0.950"/><path d="M8.300 5.900v5.200M5.700 8.500h5.200" stroke="#fff" stroke-width="0.950"/></g>
<g transform="translate(129,108)"><path d="M0.5 5V0.5H5" fill="none" stroke="#777" stroke-width="0.9"/><path d="M2.2 2.2L5.4 5.4M5.4 2.8V5.4H2.8" fill="none" stroke="#777" stroke-width="0.9"/></g>
<g transform="translate(313.5,108)"><path d="M0.5 5V0.5H5" fill="none" stroke="#777" stroke-width="0.9"/><path d="M2.2 2.2L5.4 5.4M5.4 2.8V5.4H2.8" fill="none" stroke="#777" stroke-width="0.9"/></g>
<g transform="translate(468,108)"><path d="M0.5 5V0.5H5" fill="none" stroke="#777" stroke-width="0.9"/><path d="M2.2 2.2L5.4 5.4M5.4 2.8V5.4H2.8" fill="none" stroke="#777" stroke-width="0.9"/></g>
<g transform="translate(1165,108)"><path d="M0.5 5V0.5H5" fill="none" stroke="#777" stroke-width="0.9"/><path d="M2.2 2.2L5.4 5.4M5.4 2.8V5.4H2.8" fill="none" stroke="#777" stroke-width="0.9"/></g>
<g transform="translate(1266,109.8)"><path d="M0.500 3.400L3.700 0.500l3.200 2.900" fill="none" stroke="#555" stroke-width="0.9"/></g>
<g transform="translate(14,59.6)"><rect x="0.300" y="2.400" width="16.400" height="16.600" rx="0.800" fill="#f2b27c"/><path d="M4 1.600h2.400a2.100 2.100 0 0 1 4.200 0h2.400v3h-9z" fill="#5f5f5f"/><circle cx="8.500" cy="1.600" r="0.900" fill="#f3f3f3"/><path d="M10.300 7.500h5.600l3.400 3.400v9.200h-9z" fill="#fff" stroke="#6a6a6a" stroke-width="0.900"/><path d="M15.800 7.600v3.400h3.400" fill="none" stroke="#6a6a6a" stroke-width="0.800"/><g fill="#fde3c4"><rect x="2.600" y="8" width="1.100" height="1.100"/><rect x="4.800" y="8" width="1.100" height="1.100"/><rect x="2.600" y="10.200" width="1.100" height="1.100"/><rect x="4.800" y="10.200" width="1.100" height="1.100"/><rect x="7" y="10.200" width="1.100" height="1.100"/><rect x="2.600" y="12.400" width="1.100" height="1.100"/><rect x="4.800" y="12.400" width="1.100" height="1.100"/><rect x="7" y="12.400" width="1.100" height="1.100"/><rect x="2.600" y="14.600" width="1.100" height="1.100"/><rect x="4.800" y="14.600" width="1.100" height="1.100"/><rect x="2.600" y="16.600" width="1.100" height="1.100"/><rect x="4.800" y="16.600" width="1.100" height="1.100"/></g></g>
<g transform="translate(20.5,96.5)"><path d="M0 0h4l-2 2.300z" fill="#5a5a5a"/></g>
<g transform="translate(43,59)"><path d="M2.300 0.300L6.900 6.900M7.700 0.300L3.100 6.900" stroke="#b2b2b2" stroke-width="1.150" fill="none"/><circle cx="2.300" cy="8.300" r="1.750" fill="none" stroke="#b2b2b2" stroke-width="1.100"/><circle cx="7.700" cy="8.300" r="1.750" fill="none" stroke="#b2b2b2" stroke-width="1.100"/></g>
<g transform="translate(42.4,74)"><path d="M0.500 0.600h3.800l2.200 2.200v4.900h-6z" fill="#f3f3f3" stroke="#b2b2b2" stroke-width="1"/><path d="M3.900 3.400h3.800l2.200 2.200v4.600h-6z" fill="#f3f3f3" stroke="#b2b2b2" stroke-width="1"/><path d="M1.800 4.400h1.400M5.300 7.800h3.200" stroke="#cfcfcf" stroke-width="0.900"/></g>
<g transform="translate(42.5,89.5)"><path d="M0.300 5.700L3.400 3.500l2.700 3.700L3 9.600z" fill="#f2ae74"/><path d="M1.500 4.900L4.300 8.700" stroke="#f8cfa6" stroke-width="0.700"/><path d="M3.400 3.500L5.300 2.100l2.700 3.700L6.100 7.200z" fill="#555"/><path d="M6.600 3.600L9.700 1.300" stroke="#555" stroke-width="2.200" stroke-linecap="round"/></g>
<g transform="translate(193,66.5)"><path d="M0.500 0.500L5 5l4.500-4.500" fill="none" stroke="#444" stroke-width="0.9"/></g>
<g transform="translate(226.5,66.5)"><path d="M0.500 0.500L5 5l4.500-4.500" fill="none" stroke="#444" stroke-width="0.9"/></g>
<g transform="translate(247.8,64.6)"><path d="M0 2.400L1.700 0l1.700 2.400z" fill="#3b6cb5"/></g>
<g transform="translate(262.7,64.5)"><path d="M0 0h3.200L1.600 2z" fill="#3b6cb5"/></g>
<g transform="translate(288.8,68.1)"><path d="M0 0h4l-2 2.300z" fill="#5a5a5a"/></g>
<g transform="translate(0,0)"><g transform="translate(310.3,70) rotate(-45)"><rect x="-4.300" y="-2.100" width="8.600" height="4.200" rx="0.600" fill="#f0ad78"/><rect x="-3.100" y="-2.100" width="1.100" height="4.200" fill="#fbe3cf"/></g></g>
<rect x="175.80" y="93.40" width="6.60" height="0.80" fill="#444"/>
<g transform="translate(188,89)"><path d="M0 0h4l-2 2.300z" fill="#5a5a5a"/></g>
<rect x="195.60" y="90.00" width="11.80" height="0.80" fill="#777"/>
<g transform="translate(246.8,84.8)"><path d="M2.200 7.700L4.900 1.700L7.600 7.700M3.300 5.700H6.500" fill="none" stroke="#3b6cb5" stroke-width="3.300" stroke-linejoin="round" stroke-linecap="round"/><path d="M2.200 7.700L4.900 1.700L7.600 7.700M3.300 5.700H6.500" fill="none" stroke="#fff" stroke-width="1.500" stroke-linejoin="round" stroke-linecap="round"/></g>
<g transform="translate(259.3,89)"><path d="M0 0h4l-2 2.300z" fill="#5a5a5a"/></g>
<g transform="translate(268,84)"><path d="M10.300 1.400L4.200 7.700" stroke="#5a5a5a" stroke-width="1.700" fill="none"/><path d="M4.600 6.300L3.200 8.400l2.200-0.900z" fill="#3b5a96"/></g>
<rect x="267.80" y="92.40" width="11.20" height="2.60" fill="#fff200"/>
<g transform="translate(282.7,89)"><path d="M0 0h4l-2 2.300z" fill="#5a5a5a"/></g>
<rect x="291.00" y="92.40" width="11.00" height="2.60" fill="#e8262a"/>
<g transform="translate(305.4,89)"><path d="M0 0h4l-2 2.300z" fill="#5a5a5a"/></g>
<rect x="329.80" y="63.80" width="1.80" height="1.80" fill="#3b6cb5"/>
<rect x="329.80" y="67.95" width="1.80" height="1.80" fill="#3b6cb5"/>
<rect x="329.80" y="72.10" width="1.80" height="1.80" fill="#3b6cb5"/>
<rect x="333.00" y="64.10" width="5.50" height="1.30" fill="#a0a0a0"/>
<rect x="333.00" y="68.25" width="5.50" height="1.30" fill="#a0a0a0"/>
<rect x="333.00" y="72.40" width="5.50" height="1.30" fill="#a0a0a0"/>
<g transform="translate(343.2,68.1)"><path d="M0 0h4l-2 2.300z" fill="#5a5a5a"/></g>
<rect x="352.30" y="63.40" width="2.10" height="2.80" fill="#34609f"/>
<rect x="352.30" y="67.55" width="2.10" height="2.80" fill="#34609f"/>
<rect x="352.30" y="71.70" width="2.10" height="2.80" fill="#34609f"/>
<rect x="355.60" y="64.10" width="6.20" height="1.30" fill="#a0a0a0"/>
<rect x="355.60" y="68.25" width="6.20" height="1.30" fill="#a0a0a0"/>
<rect x="355.60" y="72.40" width="6.20" height="1.30" fill="#a0a0a0"/>
<g transform="translate(365.8,68.1)"><path d="M0 0h4l-2 2.300z" fill="#5a5a5a"/></g>
<rect x="374.00" y="63.40" width="2.00" height="2.80" fill="#34609f"/>
<rect x="377.00" y="67.50" width="2.00" height="2.80" fill="#34609f"/>
<rect x="379.60" y="71.60" width="1.20" height="2.80" fill="#34609f"/>
<rect x="377.40" y="64.20" width="7.60" height="1.30" fill="#a0a0a0"/>
<rect x="380.60" y="68.35" width="4.40" height="1.30" fill="#a0a0a0"/>
<rect x="382.60" y="72.50" width="2.40" height="1.30" fill="#a0a0a0"/>
<g transform="translate(387.3,68.1)"><path d="M0 0h4l-2 2.300z" fill="#5a5a5a"/></g>
<rect x="402.00" y="64.30" width="10.60" height="1.10" fill="#a2a2a2"/>
<rect x="407.60" y="66.35" width="5.00" height="1.00" fill="#a2a2a2"/>
<rect x="407.60" y="68.35" width="5.00" height="1.00" fill="#a2a2a2"/>
<rect x="407.60" y="70.35" width="5.00" height="1.00" fill="#a2a2a2"/>
<rect x="402.00" y="72.40" width="10.60" height="1.10" fill="#a2a2a2"/>
<rect x="417.00" y="64.30" width="10.60" height="1.10" fill="#a2a2a2"/>
<rect x="422.60" y="66.35" width="5.00" height="1.00" fill="#a2a2a2"/>
<rect x="422.60" y="68.35" width="5.00" height="1.00" fill="#a2a2a2"/>
<rect x="422.60" y="70.35" width="5.00" height="1.00" fill="#a2a2a2"/>
<rect x="417.00" y="72.40" width="10.60" height="1.10" fill="#a2a2a2"/>
<g transform="translate(402,66)"><path d="M5.200 2.900H1M2.900 0.800L0.800 2.900l2.100 2.100" fill="none" stroke="#3b6cb5" stroke-width="1.150"/></g>
<g transform="translate(416.8,66)"><path d="M0.200 2.900H4.400M2.500 0.800L4.600 2.900l-2.100 2.100" fill="none" stroke="#3b6cb5" stroke-width="1.150"/></g>
<g transform="translate(443.4,63.8)"><path d="M2.500 0.200v9.400M0.600 7.600l1.900 2.100 1.900-2.100" fill="none" stroke="#555" stroke-width="0.9"/></g>
<rect x="329.60" y="86.10" width="9.40" height="1.10" fill="#9a9a9a"/>
<rect x="329.60" y="88.13" width="6.60" height="1.10" fill="#9a9a9a"/>
<rect x="329.60" y="90.16" width="9.40" height="1.10" fill="#9a9a9a"/>
<rect x="329.60" y="92.19" width="6.60" height="1.10" fill="#9a9a9a"/>
<rect x="344.20" y="86.10" width="9.60" height="1.10" fill="#858585"/>
<rect x="345.70" y="88.13" width="6.60" height="1.10" fill="#858585"/>
<rect x="344.20" y="90.16" width="9.60" height="1.10" fill="#858585"/>
<rect x="345.70" y="92.19" width="6.60" height="1.10" fill="#858585"/>
<rect x="358.80" y="86.10" width="9.40" height="1.10" fill="#9a9a9a"/>
<rect x="361.60" y="88.13" width="6.60" height="1.10" fill="#9a9a9a"/>
<rect x="358.80" y="90.16" width="9.40" height="1.10" fill="#9a9a9a"/>
<rect x="361.60" y="92.19" width="6.60" height="1.10" fill="#9a9a9a"/>
<rect x="373.60" y="86.10" width="9.40" height="1.10" fill="#9a9a9a"/>
<rect x="373.60" y="88.13" width="9.40" height="1.10" fill="#9a9a9a"/>
<rect x="373.60" y="90.16" width="9.40" height="1.10" fill="#9a9a9a"/>
<rect x="373.60" y="92.19" width="9.40" height="1.10" fill="#9a9a9a"/>
<rect x="398.20" y="85.60" width="5.40" height="1.40" fill="#9a9a9a"/>
<rect x="398.20" y="88.10" width="5.40" height="1.40" fill="#9a9a9a"/>
<rect x="398.20" y="90.60" width="5.40" height="1.40" fill="#9a9a9a"/>
<rect x="398.20" y="93.10" width="5.40" height="1.40" fill="#9a9a9a"/>
<g transform="translate(393.8,84.4)"><path d="M2.200 1.400v8.200" fill="none" stroke="#8fa9d4" stroke-width="0.800"/><path d="M0.200 2.700L2.200 0.500l2 2.200zM0.200 8.300l2 2.200 2-2.200z" fill="#3b6cb5"/></g>
<g transform="translate(406.6,89.0)"><path d="M0 0h4l-2 2.300z" fill="#5a5a5a"/></g>
<g transform="translate(421.4,83.2)"><path d="M2.200 6.400L5.600 2.400l3.400 3.400-3.600 3.400z" fill="#fff" stroke="#555" stroke-width="0.9"/><path d="M4.200 3.800V1.500a1.100 1.100 0 0 1 2.200 0v1.800" fill="none" stroke="#555" stroke-width="0.8"/><path d="M9.800 5.600c0.800 1.100 1.200 1.800 1.200 2.400a1.100 1.100 0 0 1-2.200 0c0-0.600 0.300-1.300 1-2.400z" fill="#3b6cb5"/><rect x="0.400" y="10" width="10.600" height="2" fill="#fff" stroke="#b0b0b0" stroke-width="0.600"/></g>
<g transform="translate(435.8,89.0)"><path d="M0 0h4l-2 2.300z" fill="#5a5a5a"/></g>
<g transform="translate(445,84.8)"><rect x="0.600" y="0.600" width="8.200" height="8.200" fill="#fff" stroke="#bdbdbd" stroke-width="0.900"/><path d="M4.700 0.600v8.200M0.600 4.700h8.200" stroke="#bdbdbd" stroke-width="0.9"/><path d="M0.200 8.800h9" stroke="#777" stroke-width="1"/></g>
<g transform="translate(458.2,89.0)"><path d="M0 0h4l-2 2.300z" fill="#5a5a5a"/></g>
<rect x="812.60" y="66.40" width="1.20" height="8.40" fill="#46506a"/>
<rect x="1111.00" y="79.30" width="38.80" height="0.90" fill="#4472c4"/>
<g transform="translate(1155.8,61.8)"><path d="M0.300 5.600L4.800 0.800l4.500 4.800" fill="none" stroke="#c2c2c2" stroke-width="1"/></g>
<g transform="translate(1155.8,75.6)"><path d="M0.300 0.600L4.800 5.400l4.500-4.800" fill="none" stroke="#4a4a4a" stroke-width="1"/></g>
<rect x="1155.60" y="87.20" width="10.00" height="1.00" fill="#4a4a4a"/>
<g transform="translate(1155.8,89.6)"><path d="M0.300 0.600L4.800 5.400l4.500-4.800" fill="none" stroke="#4a4a4a" stroke-width="1"/></g>
<g transform="translate(1181.5,59.8)"><circle cx="5.600" cy="3.300" r="2.700" fill="none" stroke="#3b6cb5" stroke-width="1.100"/><path d="M3.700 5.200L0.600 8.300" stroke="#3b6cb5" stroke-width="1.500"/></g>
<g transform="translate(1222.5,63.400000000000006)"><path d="M0 0h4l-2 2.300z" fill="#5a5a5a"/></g>
<rect x="1181.20" y="82.00" width="1.60" height="1.60" fill="#3b6cb5"/>
<g transform="translate(1183,89.4)"><path d="M0.600 0.600v7.400l1.900-1.600 1.300 3 1.100-0.500-1.300-2.900h2.400z" fill="#fff" stroke="#666" stroke-width="0.8"/></g>
<g transform="translate(1230.4,94.2)"><path d="M0 0h4l-2 2.300z" fill="#5a5a5a"/></g>
<rect x="213.92" y="122.20" width="0.90" height="3.20" fill="#6a6a6a"/>
<rect x="208.77" y="123.40" width="1.00" height="1.00" fill="#6a6a6a"/>
<rect x="218.88" y="123.40" width="1.00" height="1.00" fill="#6a6a6a"/>
<rect x="234.15" y="122.20" width="0.90" height="3.20" fill="#6a6a6a"/>
<rect x="229.00" y="123.40" width="1.00" height="1.00" fill="#6a6a6a"/>
<rect x="239.11" y="123.40" width="1.00" height="1.00" fill="#6a6a6a"/>
<rect x="254.38" y="122.20" width="0.90" height="3.20" fill="#6a6a6a"/>
<rect x="249.23" y="123.40" width="1.00" height="1.00" fill="#6a6a6a"/>
<rect x="259.34" y="123.40" width="1.00" height="1.00" fill="#6a6a6a"/>
<rect x="274.62" y="122.20" width="0.90" height="3.20" fill="#6a6a6a"/>
<rect x="269.46" y="123.40" width="1.00" height="1.00" fill="#6a6a6a"/>
<rect x="279.57" y="123.40" width="1.00" height="1.00" fill="#6a6a6a"/>
<rect x="294.85" y="122.20" width="0.90" height="3.20" fill="#6a6a6a"/>
<rect x="289.69" y="123.40" width="1.00" height="1.00" fill="#6a6a6a"/>
<rect x="299.80" y="123.40" width="1.00" height="1.00" fill="#6a6a6a"/>
<rect x="315.07" y="122.20" width="0.90" height="3.20" fill="#6a6a6a"/>
<rect x="309.92" y="123.40" width="1.00" height="1.00" fill="#6a6a6a"/>
<rect x="320.03" y="123.40" width="1.00" height="1.00" fill="#6a6a6a"/>
<rect x="335.31" y="122.20" width="0.90" height="3.20" fill="#6a6a6a"/>
<rect x="330.15" y="123.40" width="1.00" height="1.00" fill="#6a6a6a"/>
<rect x="340.26" y="123.40" width="1.00" height="1.00" fill="#6a6a6a"/>
<rect x="355.54" y="122.20" width="0.90" height="3.20" fill="#6a6a6a"/>
<rect x="350.38" y="123.40" width="1.00" height="1.00" fill="#6a6a6a"/>
<rect x="360.49" y="123.40" width="1.00" height="1.00" fill="#6a6a6a"/>
<rect x="375.76" y="122.20" width="0.90" height="3.20" fill="#6a6a6a"/>
<rect x="370.61" y="123.40" width="1.00" height="1.00" fill="#6a6a6a"/>
<rect x="380.72" y="123.40" width="1.00" height="1.00" fill="#6a6a6a"/>
<rect x="396.00" y="122.20" width="0.90" height="3.20" fill="#6a6a6a"/>
<rect x="390.84" y="123.40" width="1.00" height="1.00" fill="#6a6a6a"/>
<rect x="400.95" y="123.40" width="1.00" height="1.00" fill="#6a6a6a"/>
<rect x="416.23" y="122.20" width="0.90" height="3.20" fill="#6a6a6a"/>
<rect x="411.07" y="123.40" width="1.00" height="1.00" fill="#6a6a6a"/>
<rect x="421.18" y="123.40" width="1.00" height="1.00" fill="#6a6a6a"/>
<rect x="436.46" y="122.20" width="0.90" height="3.20" fill="#6a6a6a"/>
<rect x="431.30" y="123.40" width="1.00" height="1.00" fill="#6a6a6a"/>
<rect x="441.41" y="123.40" width="1.00" height="1.00" fill="#6a6a6a"/>
<rect x="456.69" y="122.20" width="0.90" height="3.20" fill="#6a6a6a"/>
<rect x="451.53" y="123.40" width="1.00" height="1.00" fill="#6a6a6a"/>
<rect x="461.64" y="123.40" width="1.00" height="1.00" fill="#6a6a6a"/>
<rect x="476.92" y="122.20" width="0.90" height="3.20" fill="#6a6a6a"/>
<rect x="471.76" y="123.40" width="1.00" height="1.00" fill="#6a6a6a"/>
<rect x="481.87" y="123.40" width="1.00" height="1.00" fill="#6a6a6a"/>
<rect x="497.14" y="122.20" width="0.90" height="3.20" fill="#6a6a6a"/>
<rect x="491.99" y="123.40" width="1.00" height="1.00" fill="#6a6a6a"/>
<rect x="502.10" y="123.40" width="1.00" height="1.00" fill="#6a6a6a"/>
<rect x="517.38" y="122.20" width="0.90" height="3.20" fill="#6a6a6a"/>
<rect x="512.22" y="123.40" width="1.00" height="1.00" fill="#6a6a6a"/>
<rect x="522.33" y="123.40" width="1.00" height="1.00" fill="#6a6a6a"/>
<rect x="537.61" y="122.20" width="0.90" height="3.20" fill="#6a6a6a"/>
<rect x="532.45" y="123.40" width="1.00" height="1.00" fill="#6a6a6a"/>
<rect x="542.56" y="123.40" width="1.00" height="1.00" fill="#6a6a6a"/>
<rect x="557.84" y="122.20" width="0.90" height="3.20" fill="#6a6a6a"/>
<rect x="552.68" y="123.40" width="1.00" height="1.00" fill="#6a6a6a"/>
<rect x="562.79" y="123.40" width="1.00" height="1.00" fill="#6a6a6a"/>
<rect x="578.06" y="122.20" width="0.90" height="3.20" fill="#6a6a6a"/>
<rect x="572.91" y="123.40" width="1.00" height="1.00" fill="#6a6a6a"/>
<rect x="583.02" y="123.40" width="1.00" height="1.00" fill="#6a6a6a"/>
<rect x="598.29" y="122.20" width="0.90" height="3.20" fill="#6a6a6a"/>
<rect x="593.14" y="123.40" width="1.00" height="1.00" fill="#6a6a6a"/>
<rect x="603.25" y="123.40" width="1.00" height="1.00" fill="#6a6a6a"/>
<rect x="618.52" y="122.20" width="0.90" height="3.20" fill="#6a6a6a"/>
<rect x="613.37" y="123.40" width="1.00" height="1.00" fill="#6a6a6a"/>
<rect x="623.48" y="123.40" width="1.00" height="1.00" fill="#6a6a6a"/>
<rect x="633.60" y="123.40" width="1.00" height="1.00" fill="#6a6a6a"/>
<g transform="translate(262,118)"><path d="M0.400 0.400h5.800v1.200L3.300 4.300L0.400 1.600z" fill="#fff" stroke="#9a9a9a" stroke-width="0.700"/><path d="M3.300 4.500L6.200 7.300v1.500H0.400V7.300z" fill="#fff" stroke="#9a9a9a" stroke-width="0.700"/><rect x="0.400" y="9.500" width="5.800" height="4.600" fill="#fff" stroke="#9a9a9a" stroke-width="0.700"/></g>
<g transform="translate(569.9,123)"><path d="M3.300 0.500L6.200 3.300v1.500H0.400V3.300z" fill="#fff" stroke="#9a9a9a" stroke-width="0.700"/></g>
<rect x="5.00" y="122.20" width="1.50" height="4.50" fill="#4a4a4a"/>
<rect x="5.00" y="125.20" width="4.20" height="1.50" fill="#4a4a4a"/>
<rect x="6.80" y="161.45" width="3.00" height="0.90" fill="#6a6a6a"/>
<rect x="7.70" y="156.30" width="1.10" height="1.00" fill="#6a6a6a"/>
<rect x="7.70" y="166.41" width="1.10" height="1.00" fill="#6a6a6a"/>
<rect x="6.80" y="181.69" width="3.00" height="0.90" fill="#6a6a6a"/>
<rect x="7.70" y="176.53" width="1.10" height="1.00" fill="#6a6a6a"/>
<rect x="7.70" y="186.64" width="1.10" height="1.00" fill="#6a6a6a"/>
<rect x="6.80" y="201.91" width="3.00" height="0.90" fill="#6a6a6a"/>
<rect x="7.70" y="196.76" width="1.10" height="1.00" fill="#6a6a6a"/>
<rect x="7.70" y="206.87" width="1.10" height="1.00" fill="#6a6a6a"/>
<rect x="6.80" y="222.14" width="3.00" height="0.90" fill="#6a6a6a"/>
<rect x="7.70" y="216.99" width="1.10" height="1.00" fill="#6a6a6a"/>
<rect x="7.70" y="227.10" width="1.10" height="1.00" fill="#6a6a6a"/>
<rect x="6.80" y="242.38" width="3.00" height="0.90" fill="#6a6a6a"/>
<rect x="7.70" y="237.22" width="1.10" height="1.00" fill="#6a6a6a"/>
<rect x="7.70" y="247.33" width="1.10" height="1.00" fill="#6a6a6a"/>
<rect x="6.80" y="262.61" width="3.00" height="0.90" fill="#6a6a6a"/>
<rect x="7.70" y="257.45" width="1.10" height="1.00" fill="#6a6a6a"/>
<rect x="7.70" y="267.56" width="1.10" height="1.00" fill="#6a6a6a"/>
<rect x="6.80" y="282.84" width="3.00" height="0.90" fill="#6a6a6a"/>
<rect x="7.70" y="277.68" width="1.10" height="1.00" fill="#6a6a6a"/>
<rect x="7.70" y="287.79" width="1.10" height="1.00" fill="#6a6a6a"/>
<rect x="6.80" y="303.07" width="3.00" height="0.90" fill="#6a6a6a"/>
<rect x="7.70" y="297.91" width="1.10" height="1.00" fill="#6a6a6a"/>
<rect x="7.70" y="308.02" width="1.10" height="1.00" fill="#6a6a6a"/>
<rect x="6.80" y="323.30" width="3.00" height="0.90" fill="#6a6a6a"/>
<rect x="7.70" y="318.14" width="1.10" height="1.00" fill="#6a6a6a"/>
<rect x="7.70" y="328.25" width="1.10" height="1.00" fill="#6a6a6a"/>
<rect x="6.80" y="343.53" width="3.00" height="0.90" fill="#6a6a6a"/>
<rect x="7.70" y="338.37" width="1.10" height="1.00" fill="#6a6a6a"/>
<rect x="7.70" y="348.48" width="1.10" height="1.00" fill="#6a6a6a"/>
<rect x="6.80" y="363.75" width="3.00" height="0.90" fill="#6a6a6a"/>
<rect x="7.70" y="358.60" width="1.10" height="1.00" fill="#6a6a6a"/>
<rect x="7.70" y="368.71" width="1.10" height="1.00" fill="#6a6a6a"/>
<rect x="6.80" y="383.99" width="3.00" height="0.90" fill="#6a6a6a"/>
<rect x="7.70" y="378.83" width="1.10" height="1.00" fill="#6a6a6a"/>
<rect x="7.70" y="388.94" width="1.10" height="1.00" fill="#6a6a6a"/>
<rect x="6.80" y="404.22" width="3.00" height="0.90" fill="#6a6a6a"/>
<rect x="7.70" y="399.06" width="1.10" height="1.00" fill="#6a6a6a"/>
<rect x="7.70" y="409.17" width="1.10" height="1.00" fill="#6a6a6a"/>
<rect x="6.80" y="424.45" width="3.00" height="0.90" fill="#6a6a6a"/>
<rect x="7.70" y="419.29" width="1.10" height="1.00" fill="#6a6a6a"/>
<rect x="7.70" y="429.40" width="1.10" height="1.00" fill="#6a6a6a"/>
<rect x="6.80" y="444.68" width="3.00" height="0.90" fill="#6a6a6a"/>
<rect x="7.70" y="439.52" width="1.10" height="1.00" fill="#6a6a6a"/>
<rect x="7.70" y="449.63" width="1.10" height="1.00" fill="#6a6a6a"/>
<rect x="6.80" y="464.91" width="3.00" height="0.90" fill="#6a6a6a"/>
<rect x="7.70" y="459.75" width="1.10" height="1.00" fill="#6a6a6a"/>
<rect x="7.70" y="469.86" width="1.10" height="1.00" fill="#6a6a6a"/>
<rect x="6.80" y="485.14" width="3.00" height="0.90" fill="#6a6a6a"/>
<rect x="7.70" y="479.98" width="1.10" height="1.00" fill="#6a6a6a"/>
<rect x="7.70" y="490.09" width="1.10" height="1.00" fill="#6a6a6a"/>
<rect x="6.80" y="505.37" width="3.00" height="0.90" fill="#6a6a6a"/>
<rect x="7.70" y="500.21" width="1.10" height="1.00" fill="#6a6a6a"/>
<rect x="7.70" y="510.32" width="1.10" height="1.00" fill="#6a6a6a"/>
<rect x="6.80" y="525.60" width="3.00" height="0.90" fill="#6a6a6a"/>
<rect x="7.70" y="520.44" width="1.10" height="1.00" fill="#6a6a6a"/>
<rect x="7.70" y="530.55" width="1.10" height="1.00" fill="#6a6a6a"/>
<rect x="6.80" y="545.83" width="3.00" height="0.90" fill="#6a6a6a"/>
<rect x="7.70" y="540.67" width="1.10" height="1.00" fill="#6a6a6a"/>
<rect x="7.70" y="550.78" width="1.10" height="1.00" fill="#6a6a6a"/>
<rect x="6.80" y="566.05" width="3.00" height="0.90" fill="#6a6a6a"/>
<rect x="7.70" y="560.90" width="1.10" height="1.00" fill="#6a6a6a"/>
<rect x="7.70" y="571.01" width="1.10" height="1.00" fill="#6a6a6a"/>
<rect x="6.80" y="586.28" width="3.00" height="0.90" fill="#6a6a6a"/>
<rect x="7.70" y="581.13" width="1.10" height="1.00" fill="#6a6a6a"/>
<rect x="7.70" y="591.24" width="1.10" height="1.00" fill="#6a6a6a"/>
<rect x="6.80" y="606.51" width="3.00" height="0.90" fill="#6a6a6a"/>
<rect x="7.70" y="601.36" width="1.10" height="1.00" fill="#6a6a6a"/>
<rect x="7.70" y="611.47" width="1.10" height="1.00" fill="#6a6a6a"/>
<rect x="6.80" y="626.75" width="3.00" height="0.90" fill="#6a6a6a"/>
<rect x="7.70" y="621.59" width="1.10" height="1.00" fill="#6a6a6a"/>
<rect x="7.70" y="631.70" width="1.10" height="1.00" fill="#6a6a6a"/>
<rect x="6.80" y="646.98" width="3.00" height="0.90" fill="#6a6a6a"/>
<rect x="7.70" y="641.82" width="1.10" height="1.00" fill="#6a6a6a"/>
<rect x="7.70" y="651.93" width="1.10" height="1.00" fill="#6a6a6a"/>
<rect x="6.80" y="667.21" width="3.00" height="0.90" fill="#6a6a6a"/>
<rect x="7.70" y="662.05" width="1.10" height="1.00" fill="#6a6a6a"/>
<rect x="7.70" y="672.16" width="1.10" height="1.00" fill="#6a6a6a"/>
<rect x="7.70" y="682.28" width="1.10" height="1.00" fill="#6a6a6a"/>
<g transform="translate(716,329.2)"><path d="M0 1.5 l1 -1.2 l1 1.2 l1 1.2 l1 -1.2 l1 -1.2 l1 1.2 l1 1.2 l1 -1.2 l1 -1.2 l1 1.2 l1 1.2 l1 -1.2 l1 -1.2 l1 1.2 l1 1.2 l1 -1.2 l1 -1.2 l1 1.2 l1 1.2 l1 -1.2 l1 -1.2 l1 1.2 l1 1.2 l1 -1.2 l1 -1.2 l1 1.2 l1 1.2 l1 -1.2 l1 -1.2 l1 1.2 l1 1.2 l1 -1.2 l1 -1.2 l1 1.2 l1 1.2 l1 -1.2 l1 -1.2 l1 1.2 l1 1.2 l1 -1.2 l1 -1.2 l1 1.2 l1 1.2 l1 -1.2 l1 -1.2 l1 1.2 l1 1.2 l1 -1.2 l1 -1.2 l1 1.2 l1 1.2 l1 -1.2 l1 -1.2 l1 1.2" fill="none" stroke="#e03030" stroke-width="0.7"/></g>
<g transform="translate(784.5,457.7)"><path d="M0 1.5 l1 -1.2 l1 1.2 l1 1.2 l1 -1.2 l1 -1.2 l1 1.2 l1 1.2 l1 -1.2 l1 -1.2 l1 1.2 l1 1.2 l1 -1.2 l1 -1.2 l1 1.2 l1 1.2 l1 -1.2 l1 -1.2 l1 1.2 l1 1.2 l1 -1.2 l1 -1.2 l1 1.2 l1 1.2 l1 -1.2 l1 -1.2 l1 1.2 l1 1.2 l1 -1.2 l1 -1.2 l1 1.2 l1 1.2 l1 -1.2 l1 -1.2 l1 1.2 l1 1.2 l1 -1.2 l1 -1.2 l1 1.2 l1 1.2 l1 -1.2 l1 -1.2 l1 1.2 l1 1.2 l1 -1.2 l1 -1.2 l1 1.2 l1 1.2 l1 -1.2 l1 -1.2 l1 1.2 l1 1.2 l1 -1.2 l1 -1.2 l1 1.2" fill="none" stroke="#e03030" stroke-width="0.7"/></g>
<g transform="translate(761,347.7)"><path d="M0 1.5 l1 -1.2 l1 1.2 l1 1.2 l1 -1.2 l1 -1.2 l1 1.2 l1 1.2 l1 -1.2 l1 -1.2 l1 1.2 l1 1.2 l1 -1.2" fill="none" stroke="#e03030" stroke-width="0.7"/></g>
<g transform="translate(1270.7,121.3)"><path d="M0 2.800h4.400L2.200 0z" fill="#555"/></g>
<g transform="translate(1270.7,682)"><path d="M0 0h4.400L2.200 2.800z" fill="#555"/></g>
<g transform="translate(138.5,692)"><path d="M0.500 0.800h3.500l1 0.800v5.800l-1-0.600h-3.500z" fill="none" stroke="#505050" stroke-width="0.800"/><path d="M5 1.600l1-0.800h1.500M5 7.400l1-0.600h1.500" fill="none" stroke="#505050" stroke-width="0.800"/><path d="M6.500 2.600l2.800 3.200M9.300 2.600L6.500 5.800" stroke="#505050" stroke-width="0.800"/></g>
<g transform="translate(1087.2,692)"><path d="M0.500 0.600h3.200l0.900 0.700v6.200l-0.900-0.600h-3.200z M8.700 0.600h-3.200l-0.900 0.700v6.200l0.900-0.600h3.200z" fill="#e4e4e4" stroke="#707070" stroke-width="0.900"/><path d="M1.500 2.400h1.800M1.500 4h1.800M1.500 5.500h1.800M5.900 2.400h1.800M5.900 4h1.800M5.900 5.500h1.800" stroke="#8a8a8a" stroke-width="0.900"/><path d="M4.600 1.300v7" stroke="#707070" stroke-width="0.900"/></g>
<g transform="translate(1114,692)"><rect x="0.500" y="0.500" width="8.800" height="7.900" rx="0.500" fill="#d9d9d9" stroke="#666" stroke-width="1"/><path d="M2 2.500h5.800M2 4.450h5.800M2 6.400h5.800" stroke="#707070" stroke-width="1.200"/></g>
<g transform="translate(1141,692)"><rect x="0.500" y="0.500" width="7.200" height="6.800" fill="#ececec" stroke="#707070" stroke-width="0.900"/><path d="M0.500 2.300h7.200" stroke="#707070" stroke-width="0.900"/><path d="M1.800 3.900h3M1.800 5.400h2" stroke="#8a8a8a" stroke-width="0.800"/><circle cx="6.600" cy="6.700" r="2.300" fill="#f3f3f3" stroke="#5a5a5a" stroke-width="0.900"/><path d="M5.300 6h2.600M6.600 4.600c-1 1.400-1 2.800 0 4.200" fill="none" stroke="#6a6a6a" stroke-width="0.600"/></g>
<rect x="1162.60" y="696.60" width="5.20" height="1.00" fill="#555"/>
<rect x="1171.60" y="696.70" width="66.40" height="0.90" fill="#8c8c8c"/>
<rect x="1196.00" y="692.80" width="3.40" height="7.40" fill="#5a5a5a"/>
<rect x="1205.00" y="695.30" width="0.80" height="3.60" fill="#aaa"/>
<rect x="1241.00" y="696.60" width="6.00" height="0.90" fill="#555"/>
<rect x="1243.55" y="694.10" width="0.90" height="6.00" fill="#555"/>
</svg>
</div></body></html>
